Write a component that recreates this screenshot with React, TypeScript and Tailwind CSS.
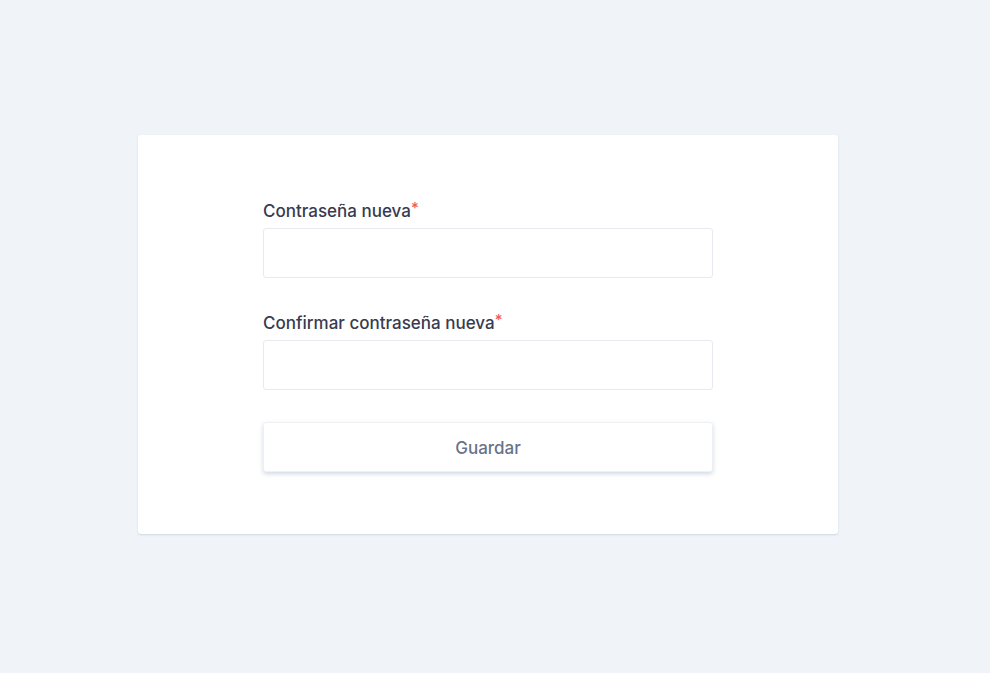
import React from "react";

export default function App() {
  return (
    <div className="min-h-[673px] w-full bg-[#f0f4f8] pt-[135px] pl-[138px]" style={{ fontFamily: "Inter, 'Noto Sans', sans-serif" }}>
      <div className="w-[700px] rounded-[3px] bg-white pt-[64px] pb-[62px] shadow-[0_1px_2px_rgba(180,195,215,0.6)]">
        <div className="mx-auto flex w-[450px] flex-col">
          <label className="flex h-[24px] items-center pt-[2px] text-[17px] font-medium text-[#383b50]">
            Contraseña nueva<span className="text-[#f05a5a] text-[15px] leading-[18px] self-start mt-[-2px]">*</span>
          </label>
          <input type="password" className="mt-[5px] h-[50px] w-full rounded-[3px] border border-[#e6eaef] bg-white outline-none" />
          <label className="mt-[33px] flex h-[24px] items-center pt-[2px] text-[17px] font-medium text-[#383b50]">
            Confirmar contraseña nueva<span className="text-[#f05a5a] text-[15px] leading-[18px] self-start mt-[-2px]">*</span>
          </label>
          <input type="password" className="mt-[5px] h-[50px] w-full rounded-[3px] border border-[#e6eaef] bg-white outline-none" />
          <button className="mt-[32px] h-[50px] w-full rounded-[3px] border border-[#eef1f4] bg-white pt-[3px] text-[17px] font-medium text-[#67738a] shadow-[0_2px_4px_rgba(170,185,205,0.55)]">
            Guardar
          </button>
        </div>
      </div>
    </div>
  );
}
